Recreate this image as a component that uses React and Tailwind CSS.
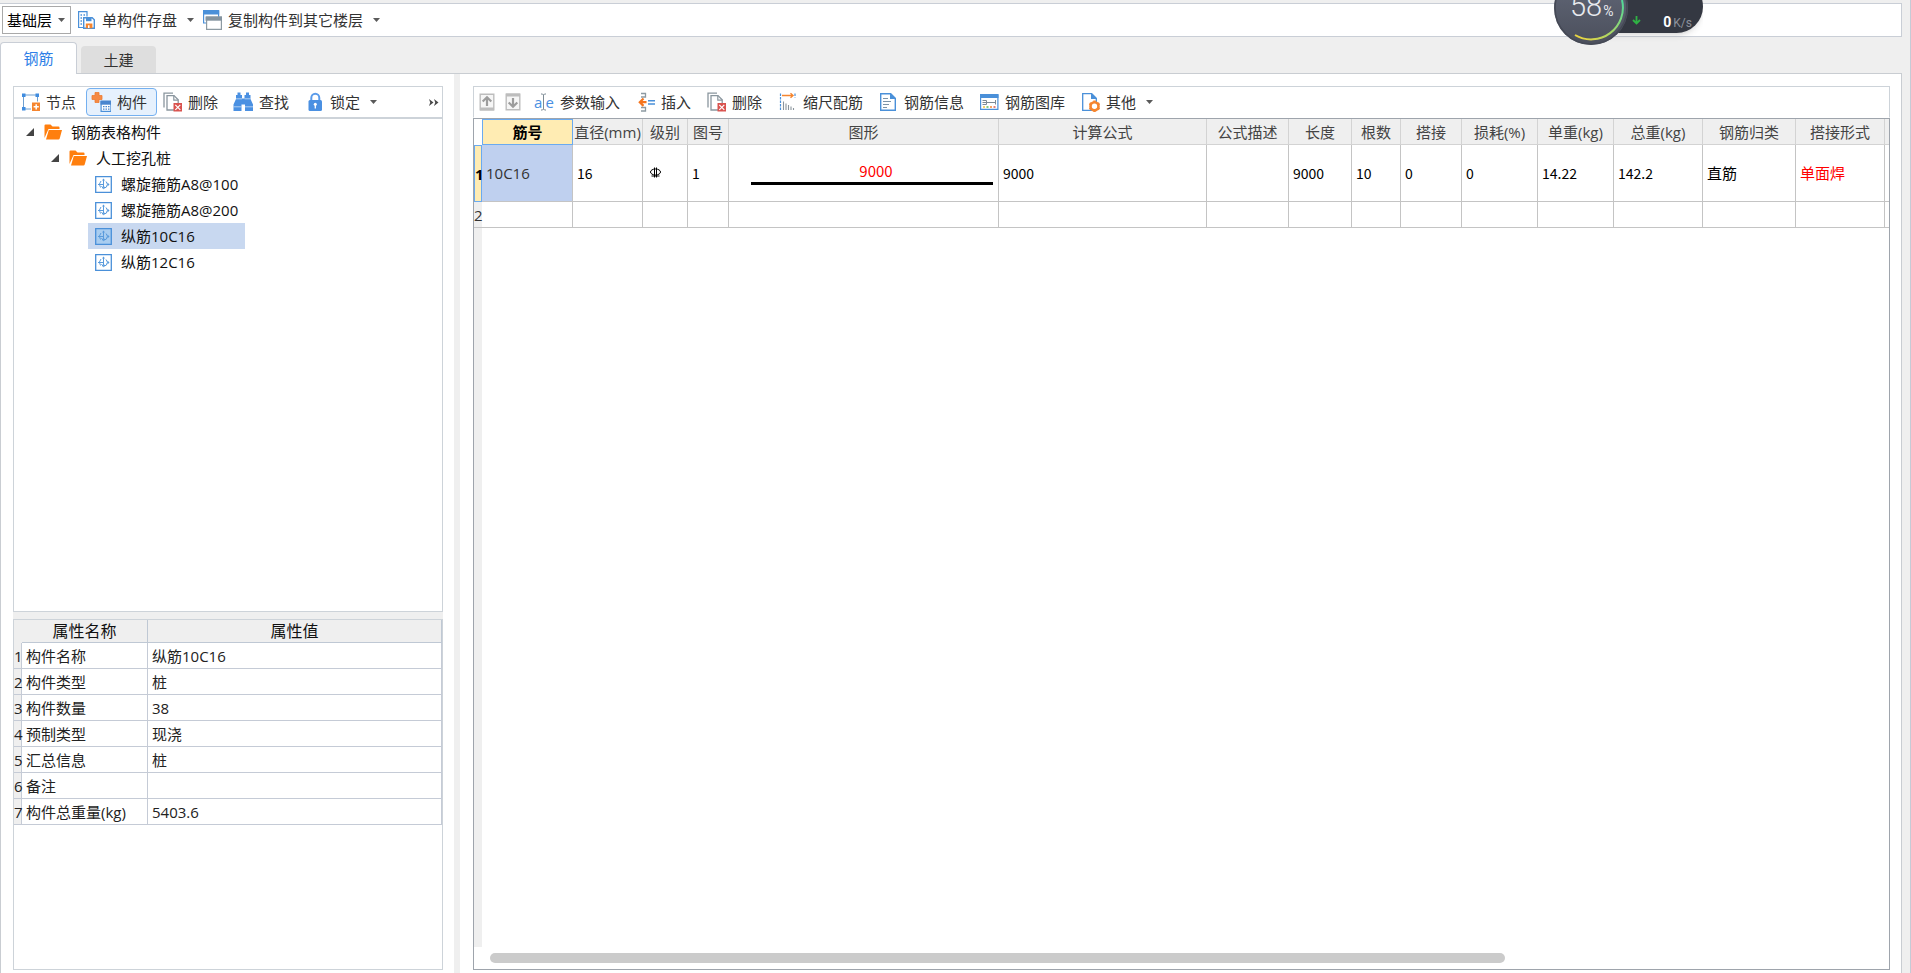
import { useState } from 'react';

function Caret() {
  return (
    <svg width="7" height="4" viewBox="0 0 7 4" className="shrink-0 ml-1">
      <path d="M0 0h7L3.5 4z" fill="#5a5a5a" />
    </svg>
  );
}

function SaveIcon() {
  return (
    <svg width="20" height="20" viewBox="0 0 20 20" fill="none">
      <path d="M7 17.500H2.600V1.600h8.400v5" stroke="#4a90d9" strokeWidth="1.200" />
      <path d="M4.500 5h1.500M7.500 5H9M4.500 8H6M4.500 11H6M4.500 14H6" stroke="#4a90d9" strokeWidth="1.400" />
      <path d="M7.700 7.700h8.500l2.100 2v8.600H7.700z" fill="#fff" stroke="#4a90d9" strokeWidth="1.400" />
      <path d="M10 8h5.500v3.200H10z" fill="#4a90d9" />
      <path d="M9.800 13.500h6.600v4.800H9.800z" fill="#f5852f" />
      <path d="M12 15.300h1.500v2.700H12z" fill="#fff" />
    </svg>
  );
}

function CopyFloorIcon() {
  return (
    <svg width="20" height="20" viewBox="0 0 20 20" fill="none">
      <path d="M1.600 1h15v12h-15z" fill="#fff" stroke="#4a90d9" strokeWidth="1.200" />
      <path d="M1 0h16.200v4.500H1z" fill="#4a90d9" />
      <path d="M4.600 7h14.800v12.400H4.600z" fill="#fff" stroke="#8d9aa2" strokeWidth="1.200" />
      <path d="M3.500 6.500H20v4.200H3.500z" fill="#8494a0" />
    </svg>
  );
}

function NodeIcon() {
  return (
    <svg width="20" height="20" viewBox="0 0 20 20" fill="none">
      <path d="M3.500 3h14v14h-14z" stroke="#6f9fd0" strokeWidth="1" />
      <path d="M2 1.500h3.500V5H2zM15.500 1.500H19V5h-3.500zM2 15h3.500v3.500H2z" fill="#3f8ce0" />
      <path d="M11 9.500h9.500V20H11z" fill="#fff" />
      <path d="M12 10.500h8.500V19H12z" fill="#f5852f" />
      <path d="M16.200 12.200v5.200M13.600 14.800h5.200" stroke="#fff" strokeWidth="1.500" />
    </svg>
  );
}

function ComponentIcon() {
  return (
    <svg width="20" height="20" viewBox="0 0 20 20" fill="none">
      <path d="M4 0.500h4v3h3v4H8v3H4v-3H1v-4h3z" fill="#f58a45" stroke="#ee7c31" strokeWidth="0.800" />
      <path d="M10.100 9.600h9.800v9.800h-9.800z" fill="#fff" stroke="#4a90d9" strokeWidth="1.200" />
      <path d="M9.500 8.500h11v4.200h-11z" fill="#4a86cf" />
      <path d="M12 14.700h1.500M14.500 14.700H16M17 14.700h1.500M12 17.200h1.500M14.500 17.200H16M17 17.200h1.500" stroke="#4a86cf" strokeWidth="1.300" />
    </svg>
  );
}

function DeleteIcon() {
  return (
    <svg width="20" height="20" viewBox="0 0 20 20" fill="none">
      <path d="M2 15.500V1.200h9" stroke="#8a969e" strokeWidth="1.300" />
      <path d="M5 3.600h7l4.200 4.200V18H5z" fill="#fff" stroke="#8a969e" strokeWidth="1.300" />
      <path d="M11.800 3.500v4.600h4.500" stroke="#8a969e" strokeWidth="1.200" />
      <path d="M11.500 11h8.500v8.500h-8.500z" fill="#d9534f" />
      <path d="M13.300 12.800l5 5M18.300 12.800l-5 5" stroke="#fff" strokeWidth="1.200" />
    </svg>
  );
}

function FindIcon() {
  return (
    <svg width="20" height="20" viewBox="0 0 20 20">
      <path d="M4.500 0.500h3V3H9v3.500h2.500V3H13V0.500h3V3h1.500v4L20 12.500V19h-8v-6.500H8.500V19h-8v-6.500L3 7V3h1.500z" fill="#4a90e2" />
      <path d="M0.500 14.800h8M12 14.800h8M3 6.800h6M11.500 6.800h6" stroke="#dbe9f9" strokeWidth="0.700" />
    </svg>
  );
}

function LockIcon() {
  return (
    <svg width="20" height="20" viewBox="0 0 20 20" fill="none">
      <path d="M7.300 9V6a4 4.200 0 0 1 8 0v3" stroke="#5a9bea" strokeWidth="2" />
      <rect x="4.500" y="8" width="13.500" height="11" rx="1.500" fill="#4a90e2" />
      <circle cx="11.300" cy="12.300" r="1.500" fill="#fff" />
      <path d="M11.300 12.500v4" stroke="#fff" strokeWidth="1.300" />
    </svg>
  );
}

function MoveIcon({ down }) {
  return (
    <svg width="16" height="18" viewBox="0 0 16 18" fill="none">
      <path d="M1.200 1.200h13.600v15.600H1.200z" fill="#f6f6f6" stroke="#bdbdbd" strokeWidth="1.400" />
      <path d={down ? 'M1 0.500h14v3H1z' : 'M1 14.500h14v3H1z'} fill="#bdbdbd" />
      <path
        d={down ? 'M8 5v8.500M3.700 9.500L8 13.800l4.300-4.300' : 'M8 13V4.500M3.700 8.500L8 4.200l4.300 4.300'}
        stroke="#9c9c9c"
        strokeWidth="2.200"
      />
    </svg>
  );
}

function ParamIcon() {
  return (
    <span className="flex w-5 items-center justify-center text-[15px] leading-5 text-[#4a90e2]">
      a
      <svg width="5" height="18" viewBox="0 0 5 18" fill="none" className="-mx-px shrink-0">
        <path d="M0 1h1.500l1 1 1-1H5M2.500 2v14M0 17h1.500l1-1 1 1H5" stroke="#7d8a94" />
      </svg>
      e
    </span>
  );
}

function InsertIcon() {
  return (
    <svg width="20" height="20" viewBox="0 0 20 20" fill="none">
      <path d="M6 1.500h4.500V5H6M6 15.500h4.500V19H6" stroke="#8d9aa2" strokeWidth="1.300" />
      <path d="M5 10.200h6.500M8.500 6.500l-3.700 3.700 3.700 3.700" stroke="#f5751f" strokeWidth="2.200" />
      <path d="M13 8.700h7M13 12h7" stroke="#4a90d9" strokeWidth="1.600" />
    </svg>
  );
}

function ScaleIcon() {
  return (
    <svg width="20" height="20" viewBox="0 0 20 20" fill="none">
      <path d="M3.500 1.500V18.500M18 1.500v4" stroke="#4a90d9" strokeWidth="1.200" strokeDasharray="2.500 1" />
      <path d="M5 3.500h11M13.500 1.200l2.500 2.300-2.500 2.300" stroke="#f5852f" strokeWidth="1.400" />
      <path d="M6.500 9.500V18M9 11.500V18M11.500 13v5M14 14.500V18M16.500 16v2" stroke="#8a949c" strokeWidth="1.100" />
    </svg>
  );
}

function InfoIcon() {
  return (
    <svg width="20" height="20" viewBox="0 0 20 20" fill="none">
      <path d="M2.700 1.700h10l4.600 4.600v12H2.700z" fill="#fff" stroke="#4a90d9" strokeWidth="1.400" />
      <path d="M12 1v6h6z" fill="#4a90d9" />
      <path d="M5 6.500h5M5 9.500h8M5 12.500h6M5 15.500h4" stroke="#7c93a8" strokeWidth="1.200" />
    </svg>
  );
}

function GalleryIcon() {
  return (
    <svg width="20" height="20" viewBox="0 0 20 20" fill="none">
      <path d="M1.600 3h17.300v14.300H1.600z" fill="#fff" stroke="#4a90d9" strokeWidth="1.200" />
      <path d="M1 2h18.500v4H1z" fill="#4a90d9" />
      <path d="M3.500 8.500h4v4h-4M3.500 10.500H16.500M16.500 8v4.500" stroke="#7c8a95" />
      <path d="M4 15h2" stroke="#f2c23b" strokeWidth="1.500" />
      <path d="M7.500 15h2" stroke="#58b957" strokeWidth="1.500" />
      <path d="M11 15h2" stroke="#f5852f" strokeWidth="1.500" />
      <path d="M14.500 15h2" stroke="#d9534f" strokeWidth="1.500" />
    </svg>
  );
}

function OtherIcon() {
  return (
    <svg width="20" height="20" viewBox="0 0 20 20" fill="none">
      <path d="M2.700 1.700h9l4.600 4.600v12H2.700z" fill="#fff" stroke="#4a90d9" strokeWidth="1.300" />
      <path d="M11 1v6h6z" fill="#4a90d9" />
      <circle cx="14.500" cy="14.300" r="4" fill="#fff" stroke="#f5852f" strokeWidth="2.600" />
      <path d="M14.500 8.500V11M14.500 17.600v2.400M9.500 11.400l2.200 1.300M17.300 15.900l2.200 1.300M9.500 17.200l2.200-1.300M17.300 12.700l2.200-1.300" stroke="#f5852f" strokeWidth="2.400" />
    </svg>
  );
}

function FolderIcon() {
  return (
    <svg width="18" height="16" viewBox="0 0 18 16" className="shrink-0">
      <path d="M0.500 14V1.500Q0.500 0.500 1.500 0.500h5l2 2h6q1 0 1 1V5H4.500z" fill="#ff7f0e" />
      <path d="M4.800 6H18l-2.300 8.500q-.3 1-1.200 1H2z" fill="#ff7f0e" />
    </svg>
  );
}

function RebarIcon({ selected }) {
  return (
    <svg width="17" height="17" viewBox="0 0 17 17" fill="none" className="shrink-0">
      <path d="M0.700 0.700h15.600v15.600H0.700z" fill={selected ? '#a9cdf0' : '#fff'} stroke="#4a90d9" strokeWidth="1.300" />
      <path d="M8.500 3v8.500M6.500 10l2 3M3 8.500h5.500M6 5Q3 8 5.500 11.500M11 5.500q3 2.500 0 6H8.500" stroke="#5a9bdc" />
      <path d="M7 4.500L8.500 2.500 10 4.500zM12.500 6.500l2 2-2 2zM8.500 13.500l2-2-2-1.500z" fill="#5a9bdc" />
    </svg>
  );
}

function ToolButton({ icon, label, caret, active }) {
  let look = 'border-transparent pr-[9px]';
  if (active) look = 'border-[#74b0f0] bg-[#e6f1fd] pr-[9px]';
  if (caret) look = 'border-transparent pr-0.5';
  return (
    <button type="button" className={`flex h-7 shrink-0 items-center gap-1.5 rounded border pl-1 ${look}`}>
      {icon}
      <span>{label}</span>
      {caret && <Caret />}
    </button>
  );
}

const treeItems = ['螺旋箍筋A8@100', '螺旋箍筋A8@200', '纵筋10C16', '纵筋12C16'];

const properties = [
  ['构件名称', '纵筋10C16'],
  ['构件类型', '桩'],
  ['构件数量', '38'],
  ['预制类型', '现浇'],
  ['汇总信息', '桩'],
  ['备注', ''],
  ['构件总重量(kg)', '5403.6'],
];

const columns = [
  { title: '直径(mm)', width: 'w-[70px]', value: '16' },
  { title: '级别', width: 'w-[45px]', value: 'grade' },
  { title: '图号', width: 'w-[41px]', value: '1' },
  { title: '图形', width: 'w-[270px]', value: 'shape' },
  { title: '计算公式', width: 'w-[208px]', value: '9000' },
  { title: '公式描述', width: 'w-[82px]', value: '' },
  { title: '长度', width: 'w-[63px]', value: '9000' },
  { title: '根数', width: 'w-[49px]', value: '10' },
  { title: '搭接', width: 'w-[61px]', value: '0' },
  { title: '损耗(%)', width: 'w-[76px]', value: '0' },
  { title: '单重(kg)', width: 'w-[76px]', value: '14.22' },
  { title: '总重(kg)', width: 'w-[89px]', value: '142.2' },
  { title: '钢筋归类', width: 'w-[93px]', value: '直筋' },
  { title: '搭接形式', width: 'w-[89px]', value: '单面焊' },
];

function CellValue({ value }) {
  if (value === 'grade') {
    return (
      <svg width="13" height="12" viewBox="0 0 13 12" fill="none" className="ml-0.5" role="img" aria-label="HRB400">
        <ellipse cx="6.500" cy="5" rx="5" ry="3" stroke="#000" />
        <path d="M5.500 0.500v10M7.500 0.500v10M2.500 9h8" stroke="#000" />
      </svg>
    );
  }
  if (value === 'shape') {
    return (
      <div className="ml-[18px] mr-[5px] border-b-[3px] border-black pb-px pl-2 text-center text-[15px] leading-5 text-[#ff0000]">
        9000
      </div>
    );
  }
  return value;
}

function SpeedWidget() {
  return (
    <div className="absolute right-[207px] top-0 h-[50px] w-[150px] overflow-hidden">
      <div className="absolute -top-5 right-0 h-[53px] w-[110px] rounded-r-[27px] bg-[#343842] shadow-md" />
      <svg width="76" height="50" viewBox="0 0 76 50" className="absolute left-0 top-0" fill="none">
        <defs>
          <linearGradient id="ring" x1="0" y1="1" x2="1" y2="0">
            <stop offset="0" stopColor="#f2d43c" />
            <stop offset="1" stopColor="#4fd99a" />
          </linearGradient>
          <linearGradient id="disc" x1="0" y1="0" x2="0" y2="1">
            <stop offset="0" stopColor="#646a7a" />
            <stop offset="1" stopColor="#4b4f5c" />
          </linearGradient>
        </defs>
        <circle cx="38" cy="8" r="37" fill="url(#disc)" />
        <circle cx="38" cy="8" r="36" stroke="#454955" strokeWidth="1.500" />
        <path d="M22 35A31.800 31.800 0 0 0 69 0" stroke="url(#ring)" strokeWidth="2" />
      </svg>
      <div className="absolute -top-2.5 left-[17px] flex items-baseline gap-px font-[Roboto,sans-serif] leading-8 text-[#e8eaee]">
        <span className="text-[29px] font-light">58</span>
        <span className="text-[14px]">%</span>
      </div>
      <svg width="9" height="9" viewBox="0 0 9 9" className="absolute left-[79px] top-4" fill="none">
        <path d="M4.500 0v7M1 4l3.500 3.500L8 4" stroke="#2fb344" strokeWidth="1.800" />
      </svg>
      <div className="absolute right-[11px] top-3 flex items-baseline gap-0.5 font-[Roboto,sans-serif] leading-5">
        <span className="text-[14px] font-bold text-white">0</span>
        <span className="text-[12px] text-[#8d919b]">K/s</span>
      </div>
    </div>
  );
}

export default function App() {
  const [selected, setSelected] = useState('纵筋10C16');

  return (
    <div className="relative flex min-h-screen flex-col border-r border-[#c5cbd6] bg-[#efefef] pr-2 pt-[3px] font-['Open_Sans','Noto_Sans_CJK_SC',sans-serif] text-[15px] leading-5 text-[#333]">
      {/* Top bar */}
      <div className="flex h-[34px] items-center border border-l-0 border-[#c9ced6] bg-white pl-0.5">
        <div className="relative">
          <select
            aria-label="楼层"
            className="block h-7 w-[69px] appearance-none border border-[#a9a9a9] bg-white pl-1 text-black outline-none"
          >
            <option>基础层</option>
          </select>
          <svg width="7" height="4" viewBox="0 0 7 4" className="pointer-events-none absolute right-1.5 top-3">
            <path d="M0 0h7L3.500 4z" fill="#5a5a5a" />
          </svg>
        </div>
        <ToolButton icon={<SaveIcon />} label="单构件存盘" caret />
        <ToolButton icon={<CopyFloorIcon />} label="复制构件到其它楼层" caret />
      </div>

      {/* Tabs */}
      <div className="flex h-9 items-end gap-1">
        <button type="button" className="relative z-10 -mb-px h-8 w-[77px] rounded-t border border-b-0 border-[#c9ced6] bg-white pb-0.5 text-[#2f7fe6]">
          钢筋
        </button>
        <button type="button" className="h-[27px] w-[75px] rounded-t bg-[#dedede]">土建</button>
      </div>

      <div className="flex flex-1 border border-b-0 border-[#c9cdd2] bg-white">
        {/* Left side */}
        <aside className="ml-3 mr-[11px] flex w-[430px] shrink-0 flex-col pb-[3px] pt-3">
          <div className="flex h-8 items-center border border-[#cdd3d9] pl-px">
            <ToolButton icon={<NodeIcon />} label="节点" />
            <ToolButton icon={<ComponentIcon />} label="构件" active />
            <ToolButton icon={<DeleteIcon />} label="删除" />
            <ToolButton icon={<FindIcon />} label="查找" />
            <ToolButton icon={<LockIcon />} label="锁定" caret />
            <button type="button" aria-label="更多" className="ml-auto mr-[3px]">
              <svg width="10" height="7" viewBox="0 0 10 7" fill="#4a4a4a">
                <path d="M0 0l4.500 3.500L0 7l1.200-3.500zM5 0l4.500 3.500L5 7l1.200-3.500z" />
              </svg>
            </button>
          </div>

          <div className="h-[494px] border border-[#cdd3d9] text-[#111]">
            <div className="flex h-[26px] items-center pl-3">
              <svg width="8" height="8" viewBox="0 0 8 8"><path d="M8 0v8H0z" fill="#444" /></svg>
              <span className="ml-2.5"><FolderIcon /></span>
              <span className="ml-[9px]">钢筋表格构件</span>
            </div>
            <div className="flex h-[26px] items-center pl-[37px]">
              <svg width="8" height="8" viewBox="0 0 8 8"><path d="M8 0v8H0z" fill="#444" /></svg>
              <span className="ml-2.5"><FolderIcon /></span>
              <span className="ml-[9px]">人工挖孔桩</span>
            </div>
            {treeItems.map((item) => (
              <button
                key={item}
                type="button"
                onClick={() => setSelected(item)}
                className={
                  item === selected
                    ? 'ml-[74px] flex h-[26px] w-[157px] items-center gap-[9px] bg-[#c8d8f0] pl-[7px]'
                    : 'ml-[74px] flex h-[26px] w-[157px] items-center gap-[9px] pl-[7px]'
                }
              >
                <RebarIcon selected={item === selected} />
                {item}
              </button>
            ))}
          </div>

          <div className="h-[7px] bg-[#efefef]" />

          <div className="flex-1 border border-[#cdd3d9]">
            <table className="w-full table-fixed border-separate border-spacing-0 text-[#222]">
              <thead>
                <tr className="h-[23px] bg-[#efefef] text-[16px] leading-5 text-[#111]">
                  <th className="w-2 p-0" />
                  <th className="w-[126px] border-b border-r border-[#bfc8d4] p-0 font-normal">属性名称</th>
                  <th className="border-b border-r border-[#bfc8d4] p-0 font-normal">属性值</th>
                </tr>
              </thead>
              <tbody>
                {properties.map(([name, value], i) => (
                  <tr key={name} className="h-[26px]">
                    <th className="border-b border-r border-[#c5cbd6] bg-[#efefef] p-0 font-normal">{i + 1}</th>
                    <td className="whitespace-nowrap border-b border-r border-[#c5cbd6] p-0 pl-1">{name}</td>
                    <td className="border-b border-r border-[#c5cbd6] p-0 pl-1">{value}</td>
                  </tr>
                ))}
              </tbody>
            </table>
          </div>
        </aside>

        <div className="w-1.5 shrink-0 bg-[#efefef]" />

        {/* Right side */}
        <main className="flex min-w-0 flex-1 flex-col pb-[3px] pl-[13px] pr-[11px] pt-3">
          <div className="flex h-8 items-center border border-[#cdd3d9] border-b-transparent">
            <button type="button" aria-label="上移" className="flex w-[26px] justify-center"><MoveIcon /></button>
            <button type="button" aria-label="下移" className="mr-[3px] flex w-[26px] justify-center"><MoveIcon down /></button>
            <ToolButton icon={<ParamIcon />} label="参数输入" />
            <ToolButton icon={<InsertIcon />} label="插入" />
            <ToolButton icon={<DeleteIcon />} label="删除" />
            <ToolButton icon={<ScaleIcon />} label="缩尺配筋" />
            <ToolButton icon={<InfoIcon />} label="钢筋信息" />
            <ToolButton icon={<GalleryIcon />} label="钢筋图库" />
            <ToolButton icon={<OtherIcon />} label="其他" caret />
          </div>

          <div className="flex flex-1 flex-col overflow-hidden border border-[#9ea4ac]">
            <table className="w-full table-fixed border-separate border-spacing-0">
              <thead>
                <tr className="h-[26px] bg-[#efefef] text-[#444]">
                  <th className="w-2 bg-white p-0" />
                  <th className="w-[91px] border border-[#6aaaf0] bg-[#ffecb3] p-0 font-bold text-black">筋号</th>
                  {columns.map((col) => (
                    <th key={col.title} className={`${col.width} whitespace-nowrap border-b border-r border-[#d3d3d3] p-0 font-normal`}>
                      {col.title}
                    </th>
                  ))}
                  <th className="border-b border-[#d3d3d3] p-0" />
                </tr>
              </thead>
              <tbody>
                <tr className="h-[57px]">
                  <th className="border border-[#6aaaf0] bg-[#ffecb3] p-0 text-black">1</th>
                  <td className="border-b border-r border-[#c4c4c4] bg-[#bfd0ef] p-0 pl-1">10C16</td>
                  {columns.map((col) => (
                    <td
                      key={col.title}
                      className={`border-b border-r border-[#c4c4c4] p-0 pl-1 font-['Noto_Sans_CJK_SC',sans-serif] ${
                        col.title === '搭接形式' ? 'text-[15px] text-[#ff0000]' : col.title === '钢筋归类' ? 'text-[15px] text-black' : 'text-[14px] text-black'
                      }`}
                    >
                      <CellValue value={col.value} />
                    </td>
                  ))}
                  <td className="border-b border-[#c4c4c4] p-0" />
                </tr>
                <tr className="h-[26px]">
                  <th className="border-b border-[#c4c4c4] bg-[#efefef] p-0 font-normal">2</th>
                  <td className="border-b border-r border-[#c4c4c4] p-0" />
                  {columns.map((col) => (
                    <td key={col.title} className="border-b border-r border-[#c4c4c4] p-0" />
                  ))}
                  <td className="border-b border-[#c4c4c4] p-0" />
                </tr>
              </tbody>
            </table>
            <div className="w-2 flex-1 bg-[#efefef]" />
            <div className="flex h-[22px] items-center pl-4 pr-2">
              <div className="h-2.5 w-[73%] rounded-full bg-[#cbcbcb]" />
            </div>
          </div>
        </main>
      </div>

      <SpeedWidget />
    </div>
  );
}
